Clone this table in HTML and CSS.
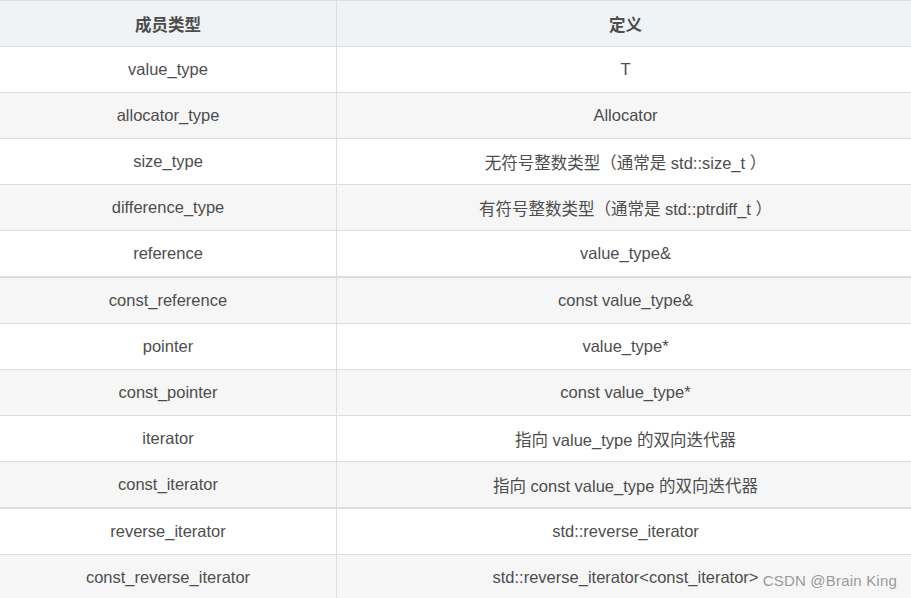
FILE: index.html
```html
<!DOCTYPE html>
<html lang="zh-CN">
<head>
<meta charset="utf-8">
<title>成员类型</title>
<link rel="stylesheet" href="styles.css">
</head>
<body>
<div class="page">
<table class="types">
  <thead>
    <tr><th class="c1">成员类型</th><th class="c2">定义</th></tr>
  </thead>
  <tbody>
    <tr><td>value_type</td><td>T</td></tr>
    <tr><td>allocator_type</td><td>Allocator</td></tr>
    <tr><td>size_type</td><td>无符号整数类型（通常是 std::size_t ）</td></tr>
    <tr><td>difference_type</td><td>有符号整数类型（通常是 std::ptrdiff_t ）</td></tr>
    <tr><td>reference</td><td>value_type&amp;</td></tr>
    <tr class="thick"><td>const_reference</td><td>const value_type&amp;</td></tr>
    <tr><td>pointer</td><td>value_type*</td></tr>
    <tr><td>const_pointer</td><td>const value_type*</td></tr>
    <tr><td>iterator</td><td>指向 value_type 的双向迭代器</td></tr>
    <tr><td>const_iterator</td><td>指向 const value_type 的双向迭代器</td></tr>
    <tr class="thick"><td>reverse_iterator</td><td>std::reverse_iterator</td></tr>
    <tr><td>const_reverse_iterator</td><td>std::reverse_iterator&lt;const_iterator&gt;</td></tr>
  </tbody>
</table>
<div class="watermark">CSDN @Brain King</div>
</div>
</body>
</html>
```

FILE: styles.css
```css
html, body {
  margin: 0;
  padding: 0;
  background: #ffffff;
  overflow: hidden;
}
.page {
  position: relative;
  width: 911px;
  height: 598px;
  overflow: hidden;
}
.types {
  border-collapse: collapse;
  width: 914px;
  table-layout: fixed;
  font-family: "Liberation Sans", "Noto Sans CJK SC", sans-serif;
  font-size: 16.5px;
  color: #4d4d4d;
}
.types th, .types td {
  height: 45px;
  padding: 0 8px;
  text-align: center;
  vertical-align: middle;
  border-top: 1px solid #dddddd;
  border-bottom: 1px solid #dddddd;
  white-space: nowrap;
}
.types th + th, .types td + td {
  border-left: 1px solid #dddddd;
}
.types .c1 { width: 320px; }
.types th {
  background: #eff3f6;
  font-weight: bold;
  color: #4d4d4d;
}
.types tbody tr:nth-child(even) td {
  background: #f6f6f6;
}
.types tr.thick td {
  border-top: 2px solid #dddddd;
}
.watermark {
  position: absolute;
  right: 14px;
  bottom: 9px;
  font-family: "Liberation Sans", sans-serif;
  font-size: 15px;
  color: #9a9a9a;
  letter-spacing: 0.2px;
}
```
